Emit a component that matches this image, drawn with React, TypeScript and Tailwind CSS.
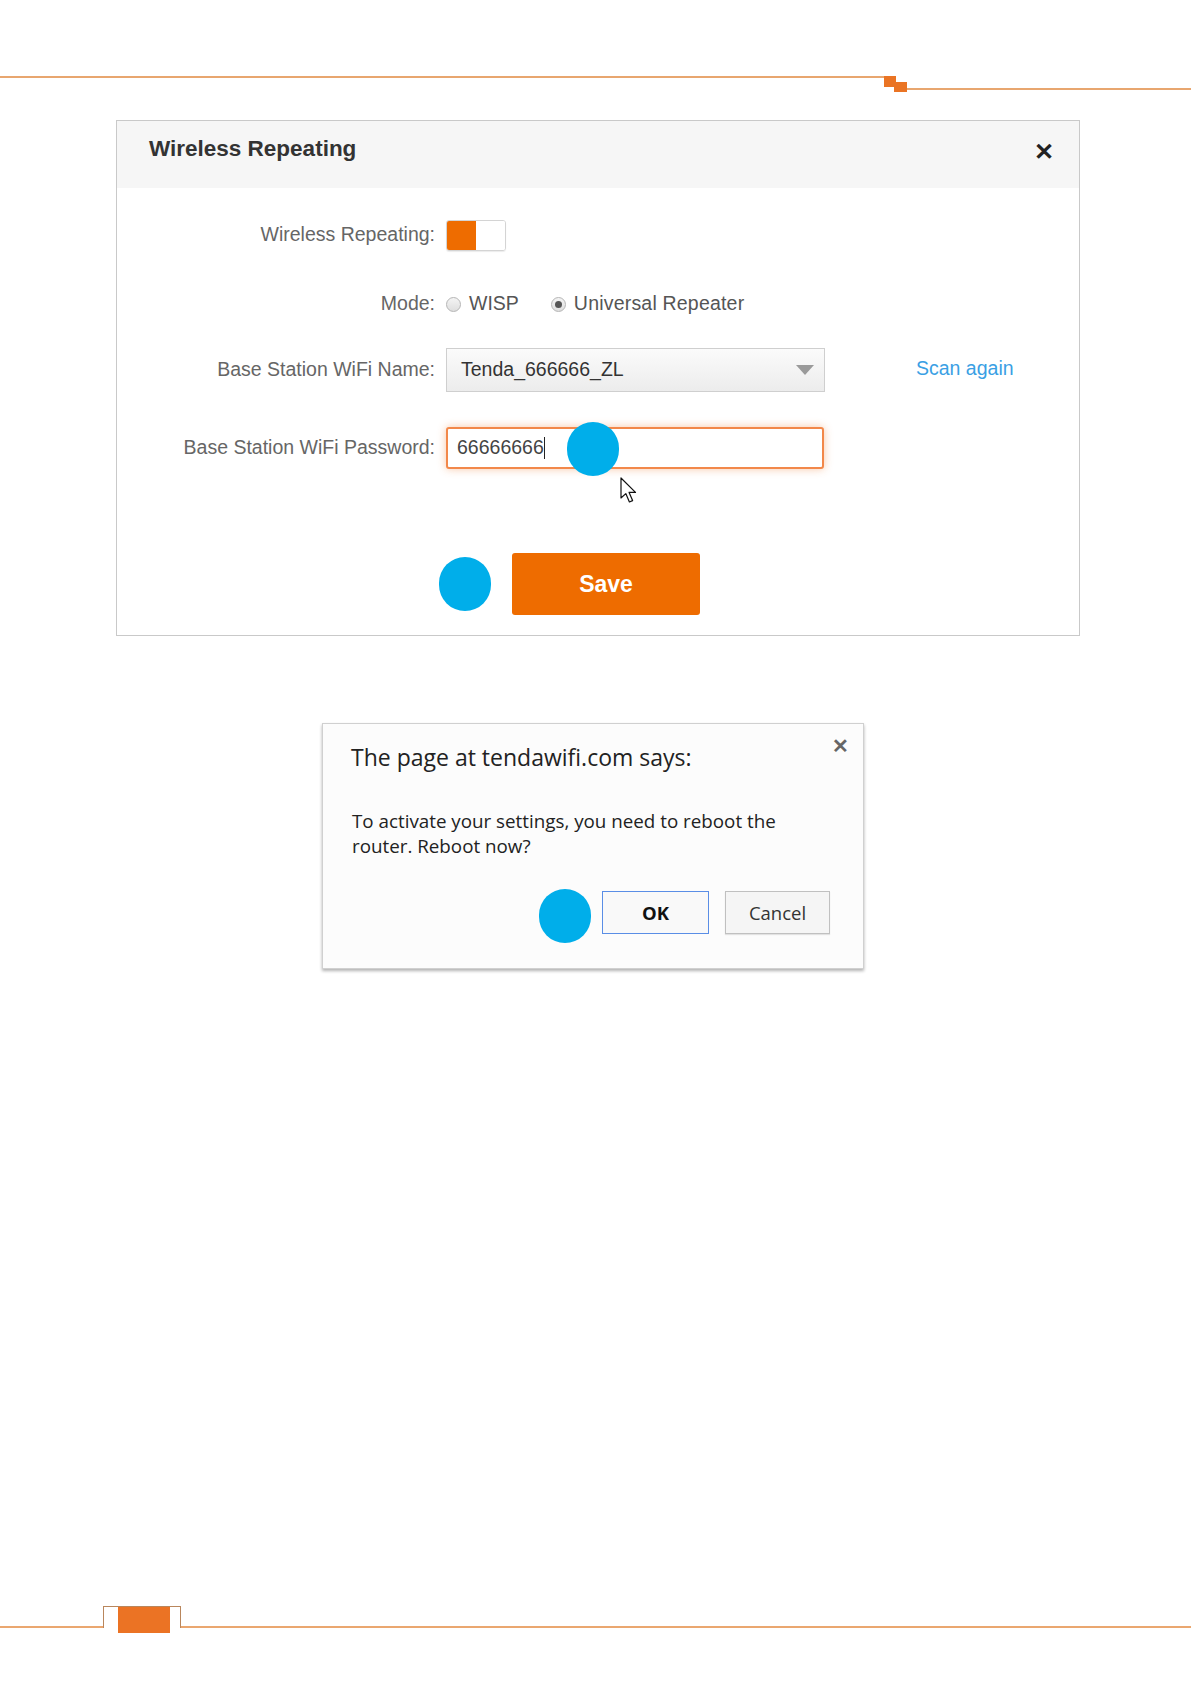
export default function App() {
  return (
    <div className="relative w-[1191px] h-[1684px] bg-white overflow-hidden flex flex-col font-['Liberation_Sans',Arial,sans-serif]">
      {/* top rule with notch */}
      <div className="flex mt-[76px] h-[17px]">
        <div className="w-[884px] h-[2px] bg-[#e8a66f]" />
        <svg width="23" height="17" viewBox="0 0 23 17" className="shrink-0">
          <rect x="0" y="0" width="12" height="11" fill="#ea7424" />
          <rect x="10" y="6" width="13" height="10" fill="#ea7424" />
        </svg>
        <div className="flex-1 h-[2px] mt-[12px] bg-[#e8a66f]" />
      </div>

      {/* Wireless Repeating card */}
      <div className="ml-[116px] mt-[27px] w-[964px] h-[516px] border border-[#c9c9c9] flex flex-col">
        <div className="h-[67px] bg-[#f6f6f6] flex items-start justify-between pl-[32px] pr-[25px] pt-[11px]">
          <span className="text-[22.5px] font-bold text-[#333]">Wireless Repeating</span>
          <span className="text-[24px] font-bold text-[#222] leading-none mt-[8px]">✕</span>
        </div>

        <div className="flex flex-col text-[19.5px] text-[#666]">
          <div className="flex items-center h-[30px] mt-[32px]">
            <div className="w-[318px] text-right">Wireless Repeating:</div>
            <div className="ml-[11px] w-[60px] h-[31px] rounded-[3px] border border-[#d4d4d4] flex overflow-hidden shadow-[0_1px_1px_rgba(0,0,0,0.08)]">
              <div className="w-[29px] bg-[#ee6c00]" />
              <div className="flex-1 bg-white" />
            </div>
          </div>

          <div className="flex items-center h-[30px] mt-[39px]">
            <div className="w-[318px] text-right">Mode:</div>
            <div className="ml-[11px] flex items-center text-[#555]">
              <span className="w-[15px] h-[15px] rounded-full border border-[#b5b5b5] bg-gradient-to-b from-[#f4f4f4] to-[#dedede]" />
              <span className="ml-[8px]">WISP</span>
              <span className="ml-[32px] w-[15px] h-[15px] rounded-full border border-[#b5b5b5] bg-gradient-to-b from-[#f4f4f4] to-[#dedede] flex items-center justify-center">
                <span className="w-[7px] h-[7px] rounded-full bg-[#555]" />
              </span>
              <span className="ml-[8px] tracking-[0.2px]">Universal Repeater</span>
            </div>
          </div>

          <div className="flex items-center h-[44px] mt-[29px]">
            <div className="w-[318px] text-right">Base Station WiFi Name:</div>
            <div className="ml-[11px] w-[379px] h-[44px] border border-[#cfcfcf] bg-gradient-to-b from-[#fbfbfb] to-[#ececec] flex items-center justify-between pl-[14px] pr-[10px] text-[#333]">
              <span>Tenda_666666_ZL</span>
              <svg width="18" height="10" viewBox="0 0 18 10">
                <path d="M0 0 L18 0 L9 10 Z" fill="#9a9a9a" />
              </svg>
            </div>
            <span className="ml-[91px] text-[#3a9fe4] -mt-[3px]">Scan again</span>
          </div>

          <div className="flex items-center h-[42px] mt-[35px]">
            <div className="w-[318px] text-right">Base Station WiFi Password:</div>
            <div className="ml-[11px] w-[378px] h-[42px] rounded-[3px] border-2 border-[#f2884a] bg-white shadow-[0_0_8px_rgba(240,130,60,0.45)] flex items-center pl-[9px] text-[#444]">
              <span>66666666</span>
              <span className="w-[1.5px] h-[22px] bg-[#222]" />
            </div>
          </div>

          <div className="flex h-[62px] mt-[84px] pl-[395px]">
            <button className="w-[188px] h-[62px] rounded-[3px] bg-[#ee6c00] text-white text-[23px] font-bold">
              Save
            </button>
          </div>
        </div>
      </div>

      {/* browser confirm dialog */}
      <div className="ml-[322px] mt-[87px] w-[542px] h-[246px] border border-[#d0d0d0] bg-[#fcfcfc] shadow-[0_2px_3px_rgba(0,0,0,0.3)] flex flex-col font-['Open_Sans','Noto_Sans',sans-serif]">
        <div className="flex justify-between h-[30px] pl-[28px] pr-[14px] mt-[18px]">
          <span className="text-[23px] leading-[30px] text-[#222]">The page at tendawifi.com says:</span>
          <span className="text-[20px] font-semibold text-[#666] leading-none -mt-[6px]">✕</span>
        </div>
        <div className="pl-[29px] mt-[37px] text-[18.8px] leading-[25px] text-[#222]">
          To activate your settings, you need to reboot the
          <br />
          router. Reboot now?
        </div>
        <div className="flex justify-end gap-[16px] pr-[33px] mt-[32px]">
          <button className="w-[107px] h-[43px] border border-[#5a8ee6] bg-[#f9f9f9] text-[18.5px] font-bold text-[#111]">
            OK
          </button>
          <button className="w-[105px] h-[43px] border border-[#c0c0c0] bg-[#f5f5f5] text-[18.5px] text-[#333] shadow-[0_1px_1px_rgba(0,0,0,0.1)]">
            Cancel
          </button>
        </div>
      </div>

      {/* footer rule */}
      <div className="mt-auto mb-[51px] flex h-[27px]">
        <div className="w-[103px] h-[22px] border-b-2 border-[#eaa770]" />
        <div className="w-[78px] h-[22px] border-t border-l border-r border-[#b9865c]">
          <div className="ml-[14px] w-[52px] h-[26px] bg-[#eb7324]" />
        </div>
        <div className="flex-1 h-[22px] border-b-2 border-[#eaa770]" />
      </div>

      {/* annotation markers */}
      <span className="absolute left-[567px] top-[422px] w-[52px] h-[54px] rounded-full bg-[#00aeea]" />
      <span className="absolute left-[439px] top-[557px] w-[52px] h-[54px] rounded-full bg-[#00aeea]" />
      <span className="absolute left-[539px] top-[889px] w-[52px] h-[54px] rounded-full bg-[#00aeea]" />

      {/* mouse pointer */}
      <svg className="absolute left-[620px] top-[477px]" width="19" height="27" viewBox="0 0 19 27">
        <path d="M1 1 L1 21 L5.8 16.6 L9.4 25 L12.6 23.6 L9.1 15.4 L15.5 15.4 Z" fill="#fff" stroke="#111" strokeWidth="1.2" strokeLinejoin="round" />
      </svg>
    </div>
  )
}
